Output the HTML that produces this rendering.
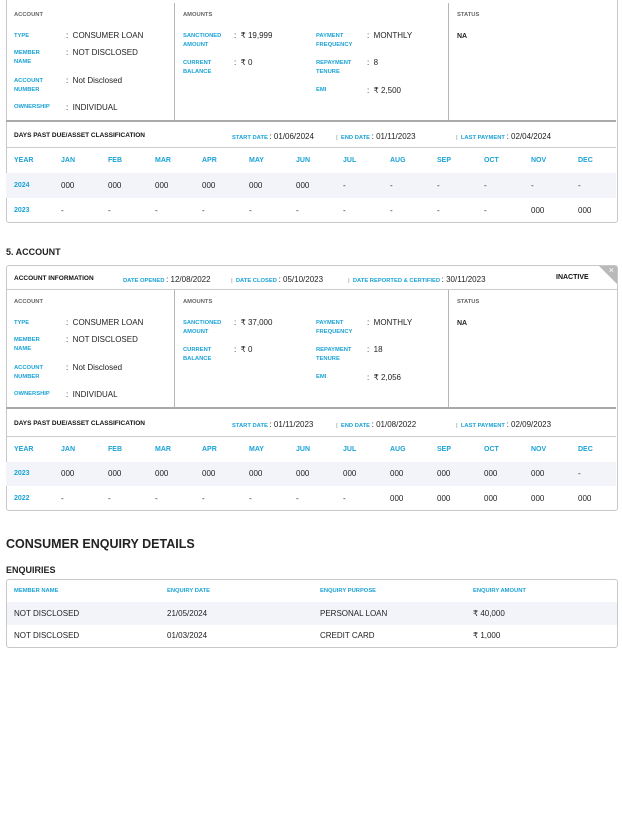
<!DOCTYPE html><html><head><meta charset="utf-8"><style>
*{margin:0;padding:0;box-sizing:border-box}
body{width:622px;height:826px;background:#fff;position:relative;overflow:hidden;font-family:"Liberation Sans",sans-serif;color:#222}
.a{position:absolute;white-space:nowrap}
.v{font-size:8px;line-height:10px;color:#222;font-weight:normal}
.l{font-size:5.8px;line-height:9px;color:#1aa3d6;font-weight:bold}
.g{font-size:5.8px;line-height:9px;color:#666;font-weight:bold}
.h{font-size:6.5px;line-height:10px;font-weight:bold;color:#111}
.m{font-size:7px;line-height:10px;color:#1aa3d6;font-weight:bold}
.card{position:absolute;left:6px;width:612px;border:1px solid #c8c8c8;border-radius:3px}
.sec{position:absolute;left:0;width:610px;height:118px}
.vl{position:absolute;top:0;bottom:0;width:1px;background:#b5b5b5}
.dpd{position:absolute;left:0;width:610px;height:101px;border-top:2px solid #aaa}
</style></head><body>

<!-- CARD 1 -->
<div class="card" style="top:-10px;height:233px"></div>
<div class="sec" style="left:6px;top:3px">
 <div class="vl" style="left:168px"></div><div class="vl" style="left:442px"></div>
 <div class="a g" style="left:8px;top:8px">ACCOUNT</div>
 <div class="a l" style="left:8px;top:29px">TYPE</div><div class="a v" style="left:60px;top:28px">:&nbsp; CONSUMER LOAN</div>
 <div class="a l" style="left:8px;top:46px">MEMBER<br>NAME</div><div class="a v" style="left:60px;top:45px">:&nbsp; NOT DISCLOSED</div>
 <div class="a l" style="left:8px;top:74px">ACCOUNT<br>NUMBER</div><div class="a v" style="left:60px;top:73px">:&nbsp; Not Disclosed</div>
 <div class="a l" style="left:8px;top:100px">OWNERSHIP</div><div class="a v" style="left:60px;top:100px">:&nbsp; INDIVIDUAL</div>
 <div class="a g" style="left:177px;top:8px">AMOUNTS</div>
 <div class="a l" style="left:177px;top:29px">SANCTIONED<br>AMOUNT</div><div class="a v" style="left:228px;top:28px">:&nbsp; ₹ 19,999</div>
 <div class="a l" style="left:177px;top:56px">CURRENT<br>BALANCE</div><div class="a v" style="left:228px;top:55px">:&nbsp; ₹ 0</div>
 <div class="a l" style="left:310px;top:29px">PAYMENT<br>FREQUENCY</div><div class="a v" style="left:361px;top:28px">:&nbsp; MONTHLY</div>
 <div class="a l" style="left:310px;top:56px">REPAYMENT<br>TENURE</div><div class="a v" style="left:361px;top:55px">:&nbsp; 8</div>
 <div class="a l" style="left:310px;top:83px">EMI</div><div class="a v" style="left:361px;top:83px">:&nbsp; ₹ 2,500</div>
 <div class="a g" style="left:451px;top:8px">STATUS</div>
 <div class="a v" style="left:451px;top:29px;font-weight:bold;font-size:7px">NA</div>
</div>
<div class="dpd" style="left:6px;top:120px">
 <div class="a h" style="left:8px;top:9px">DAYS PAST DUE/ASSET CLASSIFICATION</div>
 <div class="a l" style="left:226px;top:10px">START DATE <span class="v">: 01/06/2024</span></div>
 <div class="a l" style="left:330px;top:10px"><span style="color:#aaa">|</span>&nbsp; END DATE <span class="v">: 01/11/2023</span></div>
 <div class="a l" style="left:450px;top:10px"><span style="color:#aaa">|</span>&nbsp; LAST PAYMENT <span class="v">: 02/04/2024</span></div>
 <div class="a" style="left:0;top:25px;width:610px;height:1px;background:#ccc"></div>
 <div class="a" style="left:0;top:51px;width:610px;height:25px;background:#f2f4f9"></div>
 <div class="a m" style="left:8px;top:34px">YEAR</div>
 <div class="a m" style="left:55px;top:34px">JAN</div><div class="a m" style="left:102px;top:34px">FEB</div><div class="a m" style="left:149px;top:34px">MAR</div><div class="a m" style="left:196px;top:34px">APR</div><div class="a m" style="left:243px;top:34px">MAY</div><div class="a m" style="left:290px;top:34px">JUN</div><div class="a m" style="left:337px;top:34px">JUL</div><div class="a m" style="left:384px;top:34px">AUG</div><div class="a m" style="left:431px;top:34px">SEP</div><div class="a m" style="left:478px;top:34px">OCT</div><div class="a m" style="left:525px;top:34px">NOV</div><div class="a m" style="left:572px;top:34px">DEC</div>
 <div class="a m" style="left:8px;top:59px">2024</div>
 <div class="a v" style="left:55px;top:59px">000</div><div class="a v" style="left:102px;top:59px">000</div><div class="a v" style="left:149px;top:59px">000</div><div class="a v" style="left:196px;top:59px">000</div><div class="a v" style="left:243px;top:59px">000</div><div class="a v" style="left:290px;top:59px">000</div><div class="a v" style="left:337px;top:59px">-</div><div class="a v" style="left:384px;top:59px">-</div><div class="a v" style="left:431px;top:59px">-</div><div class="a v" style="left:478px;top:59px">-</div><div class="a v" style="left:525px;top:59px">-</div><div class="a v" style="left:572px;top:59px">-</div>
 <div class="a m" style="left:8px;top:84px">2023</div>
 <div class="a v" style="left:55px;top:84px">-</div><div class="a v" style="left:102px;top:84px">-</div><div class="a v" style="left:149px;top:84px">-</div><div class="a v" style="left:196px;top:84px">-</div><div class="a v" style="left:243px;top:84px">-</div><div class="a v" style="left:290px;top:84px">-</div><div class="a v" style="left:337px;top:84px">-</div><div class="a v" style="left:384px;top:84px">-</div><div class="a v" style="left:431px;top:84px">-</div><div class="a v" style="left:478px;top:84px">-</div><div class="a v" style="left:525px;top:84px">000</div><div class="a v" style="left:572px;top:84px">000</div>
</div>

<div class="a" style="left:6px;top:246px;font-size:9px;line-height:12px;font-weight:bold;color:#222">5. ACCOUNT</div>

<!-- CARD 2 -->
<div class="card" style="top:265px;height:246px;overflow:hidden">
 <div class="a" style="right:-1px;top:-1px;width:0;height:0;border-top:20px solid #b9b9b9;border-left:20px solid transparent"></div>
 <div class="a" style="right:3px;top:-1px;color:#fff;font-size:9px;line-height:10px">×</div>
</div>
<div class="a h" style="left:14px;top:274px">ACCOUNT INFORMATION</div>
<div class="a l" style="left:123px;top:275px">DATE OPENED <span class="v">: 12/08/2022</span></div>
<div class="a l" style="left:231px;top:275px"><span style="color:#aaa">|</span>&nbsp; DATE CLOSED <span class="v">: 05/10/2023</span></div>
<div class="a l" style="left:348px;top:275px"><span style="color:#aaa">|</span>&nbsp; DATE REPORTED &amp; CERTIFIED <span class="v">: 30/11/2023</span></div>
<div class="a h" style="left:556px;top:273px;font-size:7px">INACTIVE</div>
<div class="a" style="left:6px;top:289px;width:612px;height:1px;background:#ccc"></div>
<div class="sec" style="left:6px;top:290px">
 <div class="vl" style="left:168px"></div><div class="vl" style="left:442px"></div>
 <div class="a g" style="left:8px;top:8px">ACCOUNT</div>
 <div class="a l" style="left:8px;top:29px">TYPE</div><div class="a v" style="left:60px;top:28px">:&nbsp; CONSUMER LOAN</div>
 <div class="a l" style="left:8px;top:46px">MEMBER<br>NAME</div><div class="a v" style="left:60px;top:45px">:&nbsp; NOT DISCLOSED</div>
 <div class="a l" style="left:8px;top:74px">ACCOUNT<br>NUMBER</div><div class="a v" style="left:60px;top:73px">:&nbsp; Not Disclosed</div>
 <div class="a l" style="left:8px;top:100px">OWNERSHIP</div><div class="a v" style="left:60px;top:100px">:&nbsp; INDIVIDUAL</div>
 <div class="a g" style="left:177px;top:8px">AMOUNTS</div>
 <div class="a l" style="left:177px;top:29px">SANCTIONED<br>AMOUNT</div><div class="a v" style="left:228px;top:28px">:&nbsp; ₹ 37,000</div>
 <div class="a l" style="left:177px;top:56px">CURRENT<br>BALANCE</div><div class="a v" style="left:228px;top:55px">:&nbsp; ₹ 0</div>
 <div class="a l" style="left:310px;top:29px">PAYMENT<br>FREQUENCY</div><div class="a v" style="left:361px;top:28px">:&nbsp; MONTHLY</div>
 <div class="a l" style="left:310px;top:56px">REPAYMENT<br>TENURE</div><div class="a v" style="left:361px;top:55px">:&nbsp; 18</div>
 <div class="a l" style="left:310px;top:83px">EMI</div><div class="a v" style="left:361px;top:83px">:&nbsp; ₹ 2,056</div>
 <div class="a g" style="left:451px;top:8px">STATUS</div>
 <div class="a v" style="left:451px;top:29px;font-weight:bold;font-size:7px">NA</div>
</div>
<div class="dpd" style="left:6px;top:407px">
 <div class="a h" style="left:8px;top:10px">DAYS PAST DUE/ASSET CLASSIFICATION</div>
 <div class="a l" style="left:226px;top:11px">START DATE <span class="v">: 01/11/2023</span></div>
 <div class="a l" style="left:330px;top:11px"><span style="color:#aaa">|</span>&nbsp; END DATE <span class="v">: 01/08/2022</span></div>
 <div class="a l" style="left:450px;top:11px"><span style="color:#aaa">|</span>&nbsp; LAST PAYMENT <span class="v">: 02/09/2023</span></div>
 <div class="a" style="left:0;top:27px;width:610px;height:1px;background:#ccc"></div>
 <div class="a" style="left:0;top:53px;width:610px;height:24px;background:#f2f4f9"></div>
 <div class="a m" style="left:8px;top:36px">YEAR</div>
 <div class="a m" style="left:55px;top:36px">JAN</div><div class="a m" style="left:102px;top:36px">FEB</div><div class="a m" style="left:149px;top:36px">MAR</div><div class="a m" style="left:196px;top:36px">APR</div><div class="a m" style="left:243px;top:36px">MAY</div><div class="a m" style="left:290px;top:36px">JUN</div><div class="a m" style="left:337px;top:36px">JUL</div><div class="a m" style="left:384px;top:36px">AUG</div><div class="a m" style="left:431px;top:36px">SEP</div><div class="a m" style="left:478px;top:36px">OCT</div><div class="a m" style="left:525px;top:36px">NOV</div><div class="a m" style="left:572px;top:36px">DEC</div>
 <div class="a m" style="left:8px;top:60px">2023</div>
 <div class="a v" style="left:55px;top:60px">000</div><div class="a v" style="left:102px;top:60px">000</div><div class="a v" style="left:149px;top:60px">000</div><div class="a v" style="left:196px;top:60px">000</div><div class="a v" style="left:243px;top:60px">000</div><div class="a v" style="left:290px;top:60px">000</div><div class="a v" style="left:337px;top:60px">000</div><div class="a v" style="left:384px;top:60px">000</div><div class="a v" style="left:431px;top:60px">000</div><div class="a v" style="left:478px;top:60px">000</div><div class="a v" style="left:525px;top:60px">000</div><div class="a v" style="left:572px;top:60px">-</div>
 <div class="a m" style="left:8px;top:85px">2022</div>
 <div class="a v" style="left:55px;top:85px">-</div><div class="a v" style="left:102px;top:85px">-</div><div class="a v" style="left:149px;top:85px">-</div><div class="a v" style="left:196px;top:85px">-</div><div class="a v" style="left:243px;top:85px">-</div><div class="a v" style="left:290px;top:85px">-</div><div class="a v" style="left:337px;top:85px">-</div><div class="a v" style="left:384px;top:85px">000</div><div class="a v" style="left:431px;top:85px">000</div><div class="a v" style="left:478px;top:85px">000</div><div class="a v" style="left:525px;top:85px">000</div><div class="a v" style="left:572px;top:85px">000</div>
</div>

<!-- ENQUIRIES -->
<div class="a" style="left:6px;top:536px;font-size:12.5px;line-height:16px;font-weight:bold;color:#222">CONSUMER ENQUIRY DETAILS</div>
<div class="a" style="left:6px;top:565px;font-size:9px;line-height:11px;font-weight:bold;color:#222">ENQUIRIES</div>
<div class="card" style="top:579px;height:69px;overflow:hidden">
 <div class="a" style="left:0;top:22px;width:612px;height:23px;background:#f2f4f9"></div>
</div>
<div class="a l" style="left:14px;top:587px">MEMBER NAME</div>
<div class="a l" style="left:167px;top:587px">ENQUIRY DATE</div>
<div class="a l" style="left:320px;top:587px">ENQUIRY PURPOSE</div>
<div class="a l" style="left:473px;top:587px">ENQUIRY AMOUNT</div>
<div class="a v" style="left:14px;top:609px">NOT DISCLOSED</div><div class="a v" style="left:167px;top:609px">21/05/2024</div><div class="a v" style="left:320px;top:609px">PERSONAL LOAN</div><div class="a v" style="left:473px;top:609px">₹ 40,000</div>
<div class="a v" style="left:14px;top:631px">NOT DISCLOSED</div><div class="a v" style="left:167px;top:631px">01/03/2024</div><div class="a v" style="left:320px;top:631px">CREDIT CARD</div><div class="a v" style="left:473px;top:631px">₹ 1,000</div>
</body></html>
